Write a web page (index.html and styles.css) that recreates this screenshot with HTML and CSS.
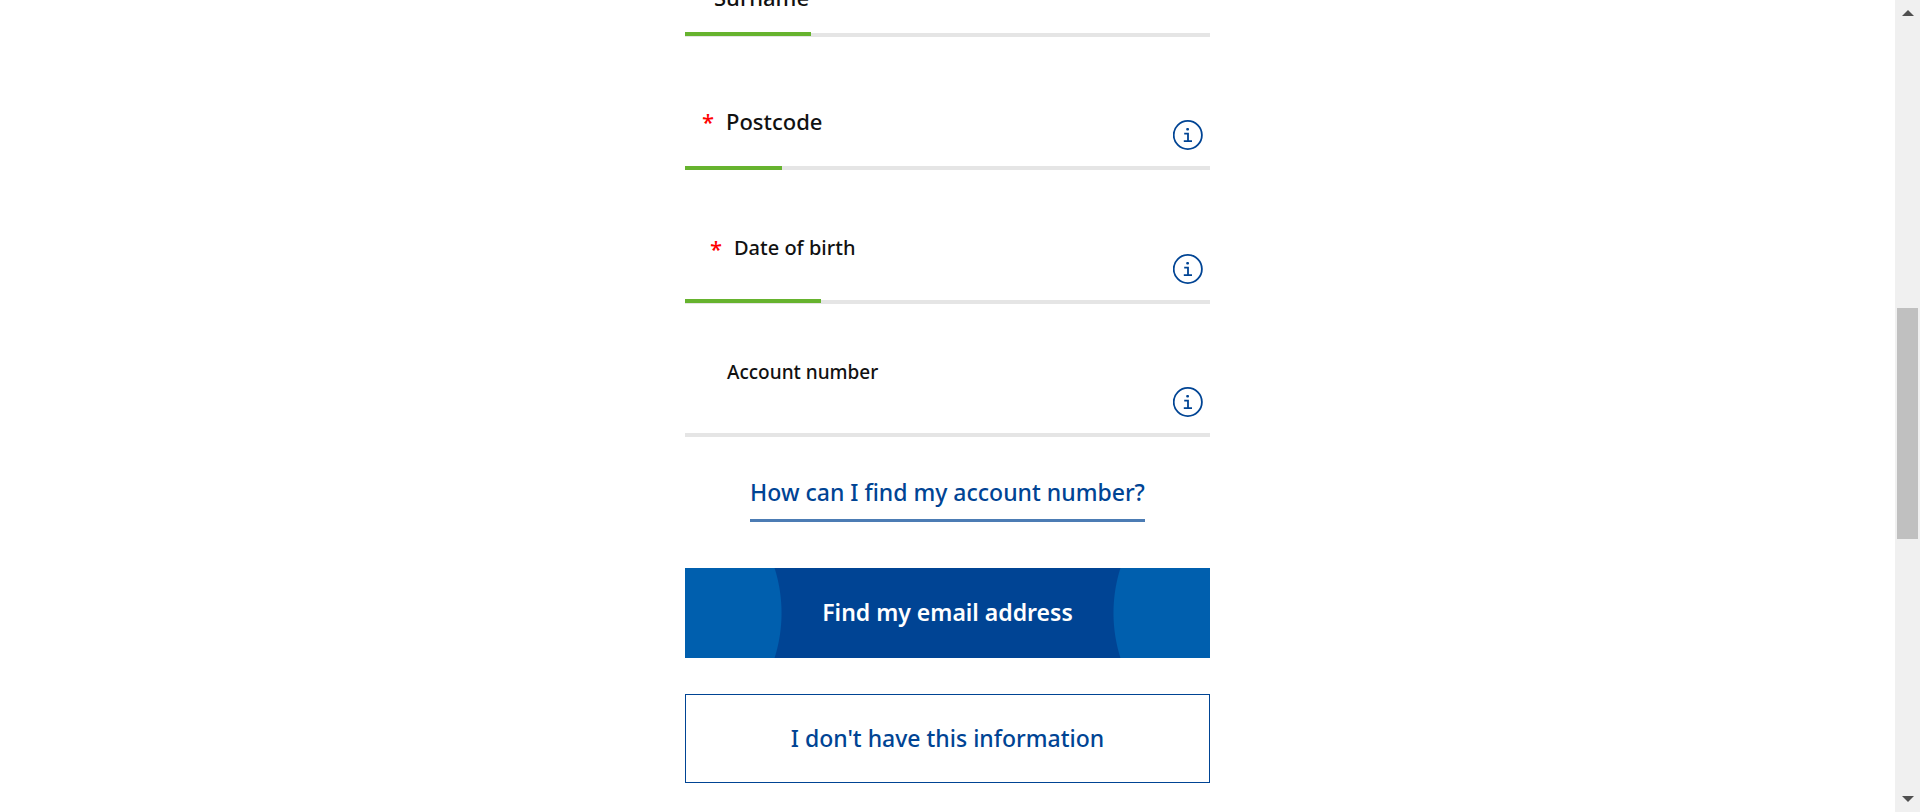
FILE: index.html
```html
<!DOCTYPE html>
<html lang="en">
<head>
<meta charset="utf-8">
<title>Find my email address</title>
<link rel="stylesheet" href="styles.css">
</head>
<body>
<svg class="symbols" aria-hidden="true">
  <symbol id="info" viewBox="0 0 30 30">
    <circle cx="14.8" cy="15" r="14.1" fill="none" stroke="#004494" stroke-width="1.8"/>
    <rect x="13.2" y="8" width="2.8" height="2.6" rx="1" fill="#004494"/>
    <path d="M11.2 13.6H15V21.2M10.8 21.2H19" fill="none" stroke="#004494" stroke-width="1.8"/>
  </symbol>
</svg>
<main class="page">
  <form class="form">
    <div class="field field-first">
      <input class="field-input" id="surname" type="text">
      <span class="field-progress raised" style="width:24%"></span>
      <label class="field-label label-surname" for="surname">Surname</label>
    </div>
    <div class="field">
      <input class="field-input" id="postcode" type="text" required>
      <span class="field-progress" style="width:18.5%"></span>
      <label class="field-label label-postcode" for="postcode"><span class="required">*</span>Postcode</label>
      <button class="info" type="button" aria-label="About postcode"><svg class="info-icon"><use href="#info"/></svg></button>
    </div>
    <div class="field field-date">
      <input class="field-input" id="birth" type="text" required>
      <span class="field-progress raised" style="width:25.9%"></span>
      <label class="field-label label-birth" for="birth"><span class="required">*</span>Date of birth</label>
      <button class="info" type="button" aria-label="About date of birth"><svg class="info-icon"><use href="#info"/></svg></button>
    </div>
    <div class="field">
      <input class="field-input" id="account" type="text">
      <label class="field-label label-account" for="account">Account number</label>
      <button class="info" type="button" aria-label="About account number"><svg class="info-icon"><use href="#info"/></svg></button>
    </div>
    <a class="help-link" href="#account">How can I find my account number?</a>
    <button class="button button-primary" type="submit">Find my email address</button>
    <button class="button button-secondary" type="button">I don't have this information</button>
  </form>
</main>
<div class="scrollbar" aria-hidden="true">
  <svg class="scroll-arrow" viewBox="0 0 12 6"><path d="M0 6L6 0L12 6Z" fill="#505050"/></svg>
  <div class="scroll-track"><div class="scroll-thumb"></div></div>
  <svg class="scroll-arrow" viewBox="0 0 12 6"><path d="M0 0L6 6L12 0Z" fill="#505050"/></svg>
</div>
</body>
</html>
```
FILE: styles.css
```css
* { box-sizing: border-box; }

body {
  margin: 0;
  height: 100vh;
  display: flex;
  overflow: hidden;
  background: #fff;
  color: #111;
  font-family: "Noto Sans", "Open Sans", sans-serif;
  font-weight: 500;
}

.symbols { display: none; }

.page {
  flex: 1;
  min-width: 0;
}

.form {
  display: flex;
  flex-direction: column;
  width: 100%;
  max-width: 525px;
  margin: 0 auto;
}

.field {
  display: grid;
  grid-template: 133px / 1fr;
}

.field-first { grid-template-rows: 37px; }
.field-date { grid-template-rows: 134px; }

.field > * {
  grid-area: 1 / 1;
  align-self: end;
}

.field-input {
  width: 100%;
  height: 64px;
  border: 0;
  border-bottom: 4px solid #e5e5e5;
  background: none;
  font: inherit;
  outline: none;
}

.field-first .field-input { height: 37px; }

.field-progress {
  height: 4px;
  background: #66b32e;
}

.raised { margin-bottom: 1px; }

.field-label {
  justify-self: start;
  display: flex;
  font-size: 22px;
  line-height: 24px;
}

.label-surname { padding: 0 0 28px 29px; }
.label-postcode { padding: 0 0 37px 17px; }
.label-birth { padding: 0 0 44px 25px; font-size: 20px; }
.label-account { padding: 0 0 53px 42px; font-size: 19px; }

.required {
  width: 24px;
  color: #f00;
  font-size: 22px;
}

.info {
  justify-self: end;
  margin: 0 7px 20px 0;
  padding: 0;
  border: 0;
  border-radius: 50%;
  background: none;
}

.info-icon {
  display: block;
  width: 30px;
  height: 30px;
}

.help-link {
  align-self: center;
  margin-top: 39px;
  padding-bottom: 11px;
  border-bottom: 3px solid #4c7cb4;
  color: #004494;
  font-size: 23px;
  line-height: 32px;
  text-decoration: none;
}

.button {
  width: 100%;
  height: 90px;
  padding-bottom: 3px;
  font: inherit;
  font-size: 23px;
}

.button-primary {
  margin-top: 46px;
  border: 0;
  background:
    radial-gradient(circle at -52px 50%, #005fae 148px, transparent 149px),
    radial-gradient(circle at calc(100% + 52px) 50%, #005fae 148px, transparent 149px),
    #004494;
  color: #fff;
  font-weight: 600;
}

.button-secondary {
  height: 89px;
  margin-top: 36px;
  border: 1px solid #004494;
  background: #fff;
  color: #004494;
}

.scrollbar {
  display: flex;
  flex-direction: column;
  align-items: center;
  width: 25px;
  padding: 10px 0;
  background: #f0f0f0;
}

.scroll-arrow {
  width: 12px;
  height: 6px;
}

.scroll-track {
  flex: 1;
  width: 21px;
}

.scroll-thumb {
  height: 231px;
  margin-top: 292px;
  background: #c0c0c0;
}
```
